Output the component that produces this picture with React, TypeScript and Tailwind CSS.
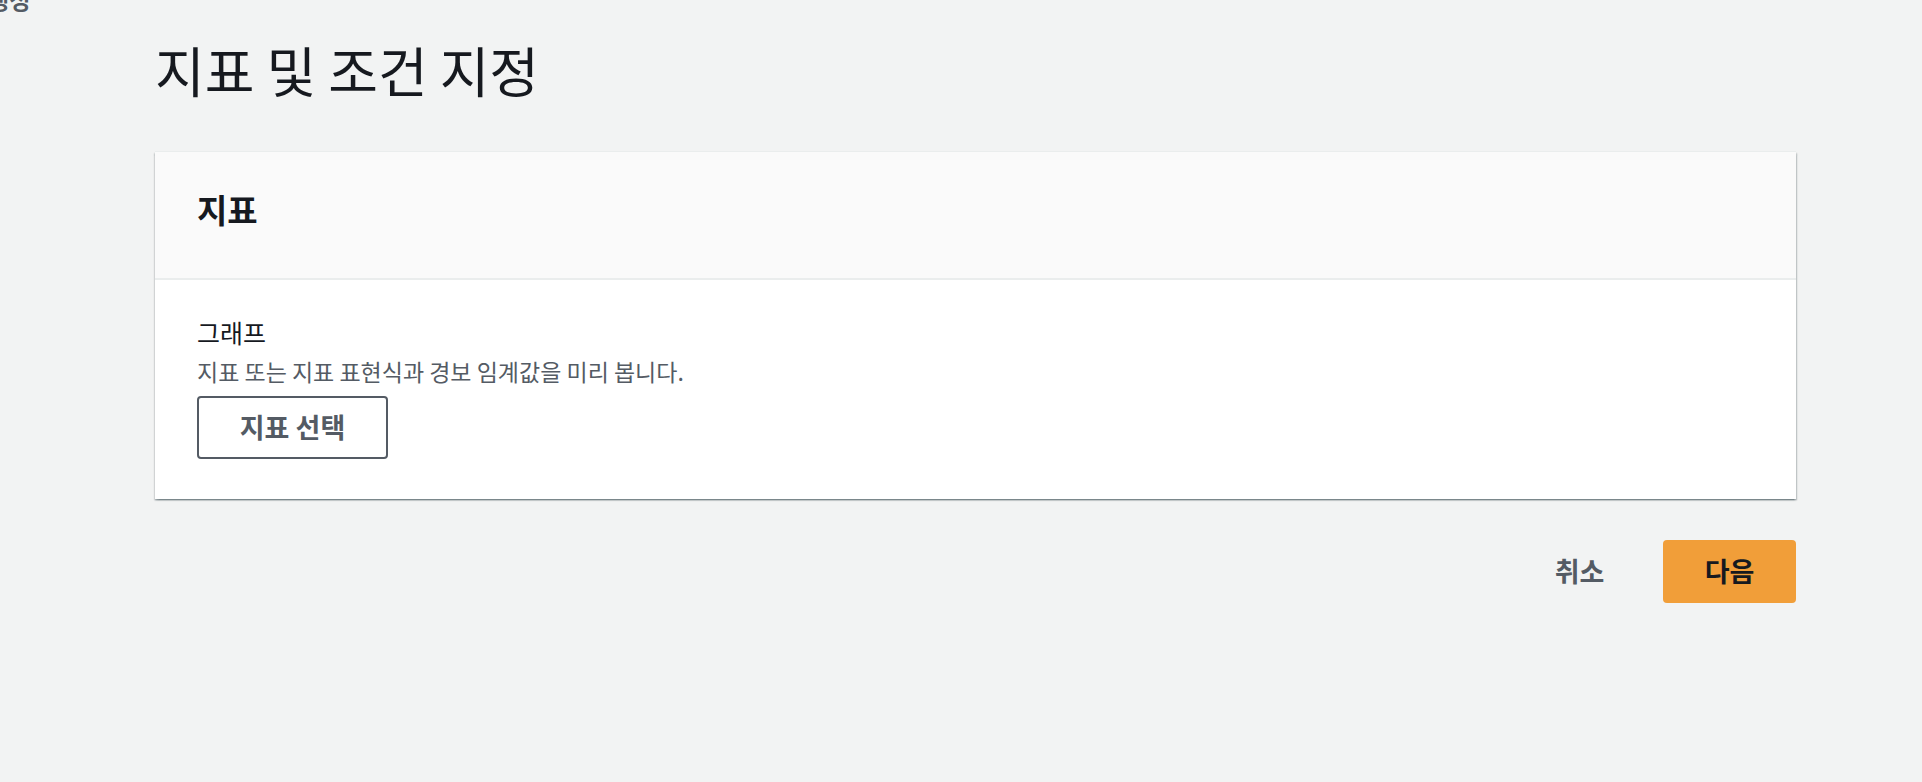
import React from "react";

export default function App() {
  return (
    <div
      className="min-h-screen w-full bg-[#f2f3f3] overflow-hidden"
      style={{ fontFamily: '"Noto Sans CJK KR", "Noto Sans", sans-serif' }}
    >
      <div className="-mt-[16px] -ml-[12px] text-[23px] leading-[30px] font-bold text-[#545b64] whitespace-nowrap">
        생성
      </div>
      <div className="pl-[155px] pr-[126px]">
        <h1 className="mt-[23px] text-[54px] leading-[66px] font-normal text-[#16191f]">
          지표 및 조건 지정
        </h1>
        <div className="mt-[48px] bg-white border-t border-[#eaeded] shadow-[0_1.5px_1.5px_0_rgba(0,28,36,0.3),1.5px_1.5px_1.5px_0_rgba(0,28,36,0.15),-1.5px_1.5px_1.5px_0_rgba(0,28,36,0.15)]">
          <div className="bg-[#fafafa] border-b-2 border-[#eaeded] px-[42px] pt-[37px] pb-[49px]">
            <h2 className="text-[33px] leading-[40px] font-bold text-[#16191f]">지표</h2>
          </div>
          <div className="px-[42px] pt-[36px] pb-[40px]">
            <div className="text-[25px] leading-[32px] text-[#16191f]">그래프</div>
            <div className="mt-[8px] text-[23px] leading-[30px] text-[#545b64]">
              지표 또는 지표 표현식과 경보 임계값을 미리 봅니다.
            </div>
            <button className="mt-[10px] flex items-center justify-center w-[191px] h-[63px] border-2 border-[#545b64] rounded-[4px] bg-white text-[27px] font-bold text-[#545b64]">
              지표 선택
            </button>
          </div>
        </div>
        <div className="mt-[41px] flex justify-end gap-[17px]">
          <button className="flex items-center justify-center w-[133px] h-[63px] text-[27px] font-bold text-[#545b64]">
            취소
          </button>
          <button className="flex items-center justify-center w-[133px] h-[63px] rounded-[4px] bg-[#f19e39] text-[27px] font-bold text-[#16191f]">
            다음
          </button>
        </div>
      </div>
    </div>
  );
}
